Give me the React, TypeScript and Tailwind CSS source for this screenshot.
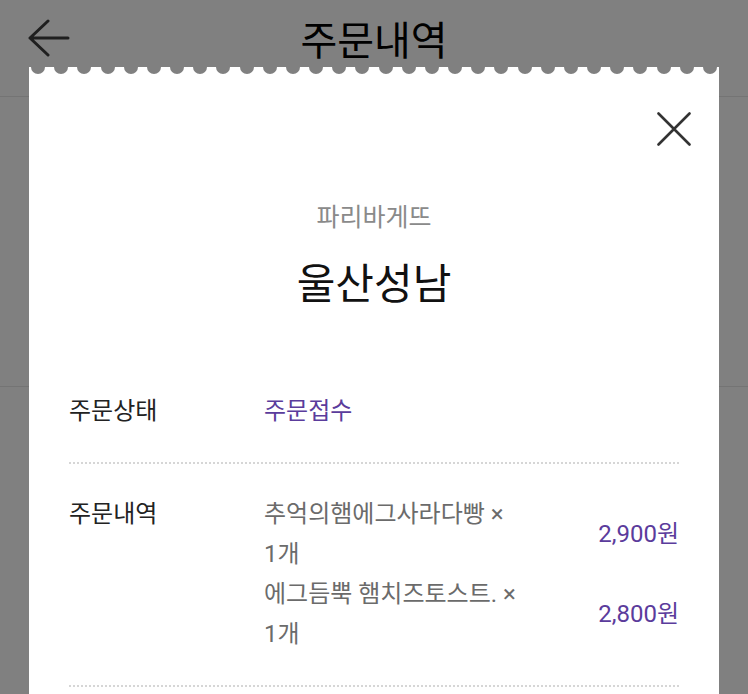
import React from 'react';

const font = { fontFamily: "Roboto, 'Noto Sans CJK KR', sans-serif" };

const items = [
  { name: '추억의햄에그사라다빵 × 1개', price: '2,900원' },
  { name: '에그듬뿍 햄치즈토스트. × 1개', price: '2,800원' },
];

function Dotted() {
  return (
    <div className="h-[2px] w-full bg-[linear-gradient(to_right,#d6d6d6_50%,transparent_50%)] bg-[length:4px_2px] bg-repeat-x" />
  );
}

export default function App() {
  return (
    <div className="relative h-[694px] w-[748px] overflow-hidden bg-[#808080]" style={font}>
      {/* page behind the overlay */}
      <div className="relative h-[97px] border-b border-[#747474]">
        <svg className="absolute left-[27px] top-[19px]" width="44" height="38" viewBox="0 0 44 38" fill="none">
          <path d="M21 2 L3 19 L21 36 M3 19 H41" stroke="#1f1f1f" strokeWidth="3" strokeLinecap="round" strokeLinejoin="round" />
        </svg>
        <div className="pt-[17px] text-center text-[40px] leading-[50px] text-black">주문내역</div>
      </div>
      <div className="h-[290px] border-b border-[#747474]" />

      {/* receipt modal */}
      <div className="absolute left-[29px] top-[67px] h-[640px] w-[690px] bg-white">
        <div className="absolute left-0 right-0 top-[-7px] flex justify-between px-[2px]">
          {Array.from({ length: 30 }).map((_, i) => (
            <span key={i} className="block h-[14px] w-[14px] rounded-full bg-[#808080]" />
          ))}
        </div>

        <div className="flex justify-end pr-[28px] pt-[45px]">
          <svg width="34" height="34" viewBox="0 0 34 34" fill="none">
            <path d="M1.5 1.5 L32.5 32.5 M32.5 1.5 L1.5 32.5" stroke="#333333" strokeWidth="2.6" strokeLinecap="round" />
          </svg>
        </div>

        <div className="mt-[56px] text-center text-[25px] leading-[32px] text-[#8a8a8a]">파리바게뜨</div>
        <div className="mt-[24px] text-center text-[42px] leading-[54px] text-[#111111]">울산성남</div>

        <div className="px-[40px]">
          <div className="mt-[79px] flex text-[24px] leading-[40px]">
            <div className="w-[195px] text-[#222222]">주문상태</div>
            <div className="text-[#5b3c9c]">주문접수</div>
          </div>
          <div className="mt-[31px]">
            <Dotted />
          </div>

          <div className="mt-[30px] flex text-[24px] leading-[40px]">
            <div className="w-[195px] shrink-0 text-[#222222]">주문내역</div>
            <div className="flex flex-1 flex-col">
              {items.map((it) => (
                <div key={it.name} className="flex items-center justify-between">
                  <div className="w-[262px] break-keep text-[#6b6b6b]">{it.name}</div>
                  <div className="text-[#5b3c9c]">{it.price}</div>
                </div>
              ))}
            </div>
          </div>
          <div className="mt-[31px]">
            <Dotted />
          </div>
        </div>
      </div>
    </div>
  );
}
